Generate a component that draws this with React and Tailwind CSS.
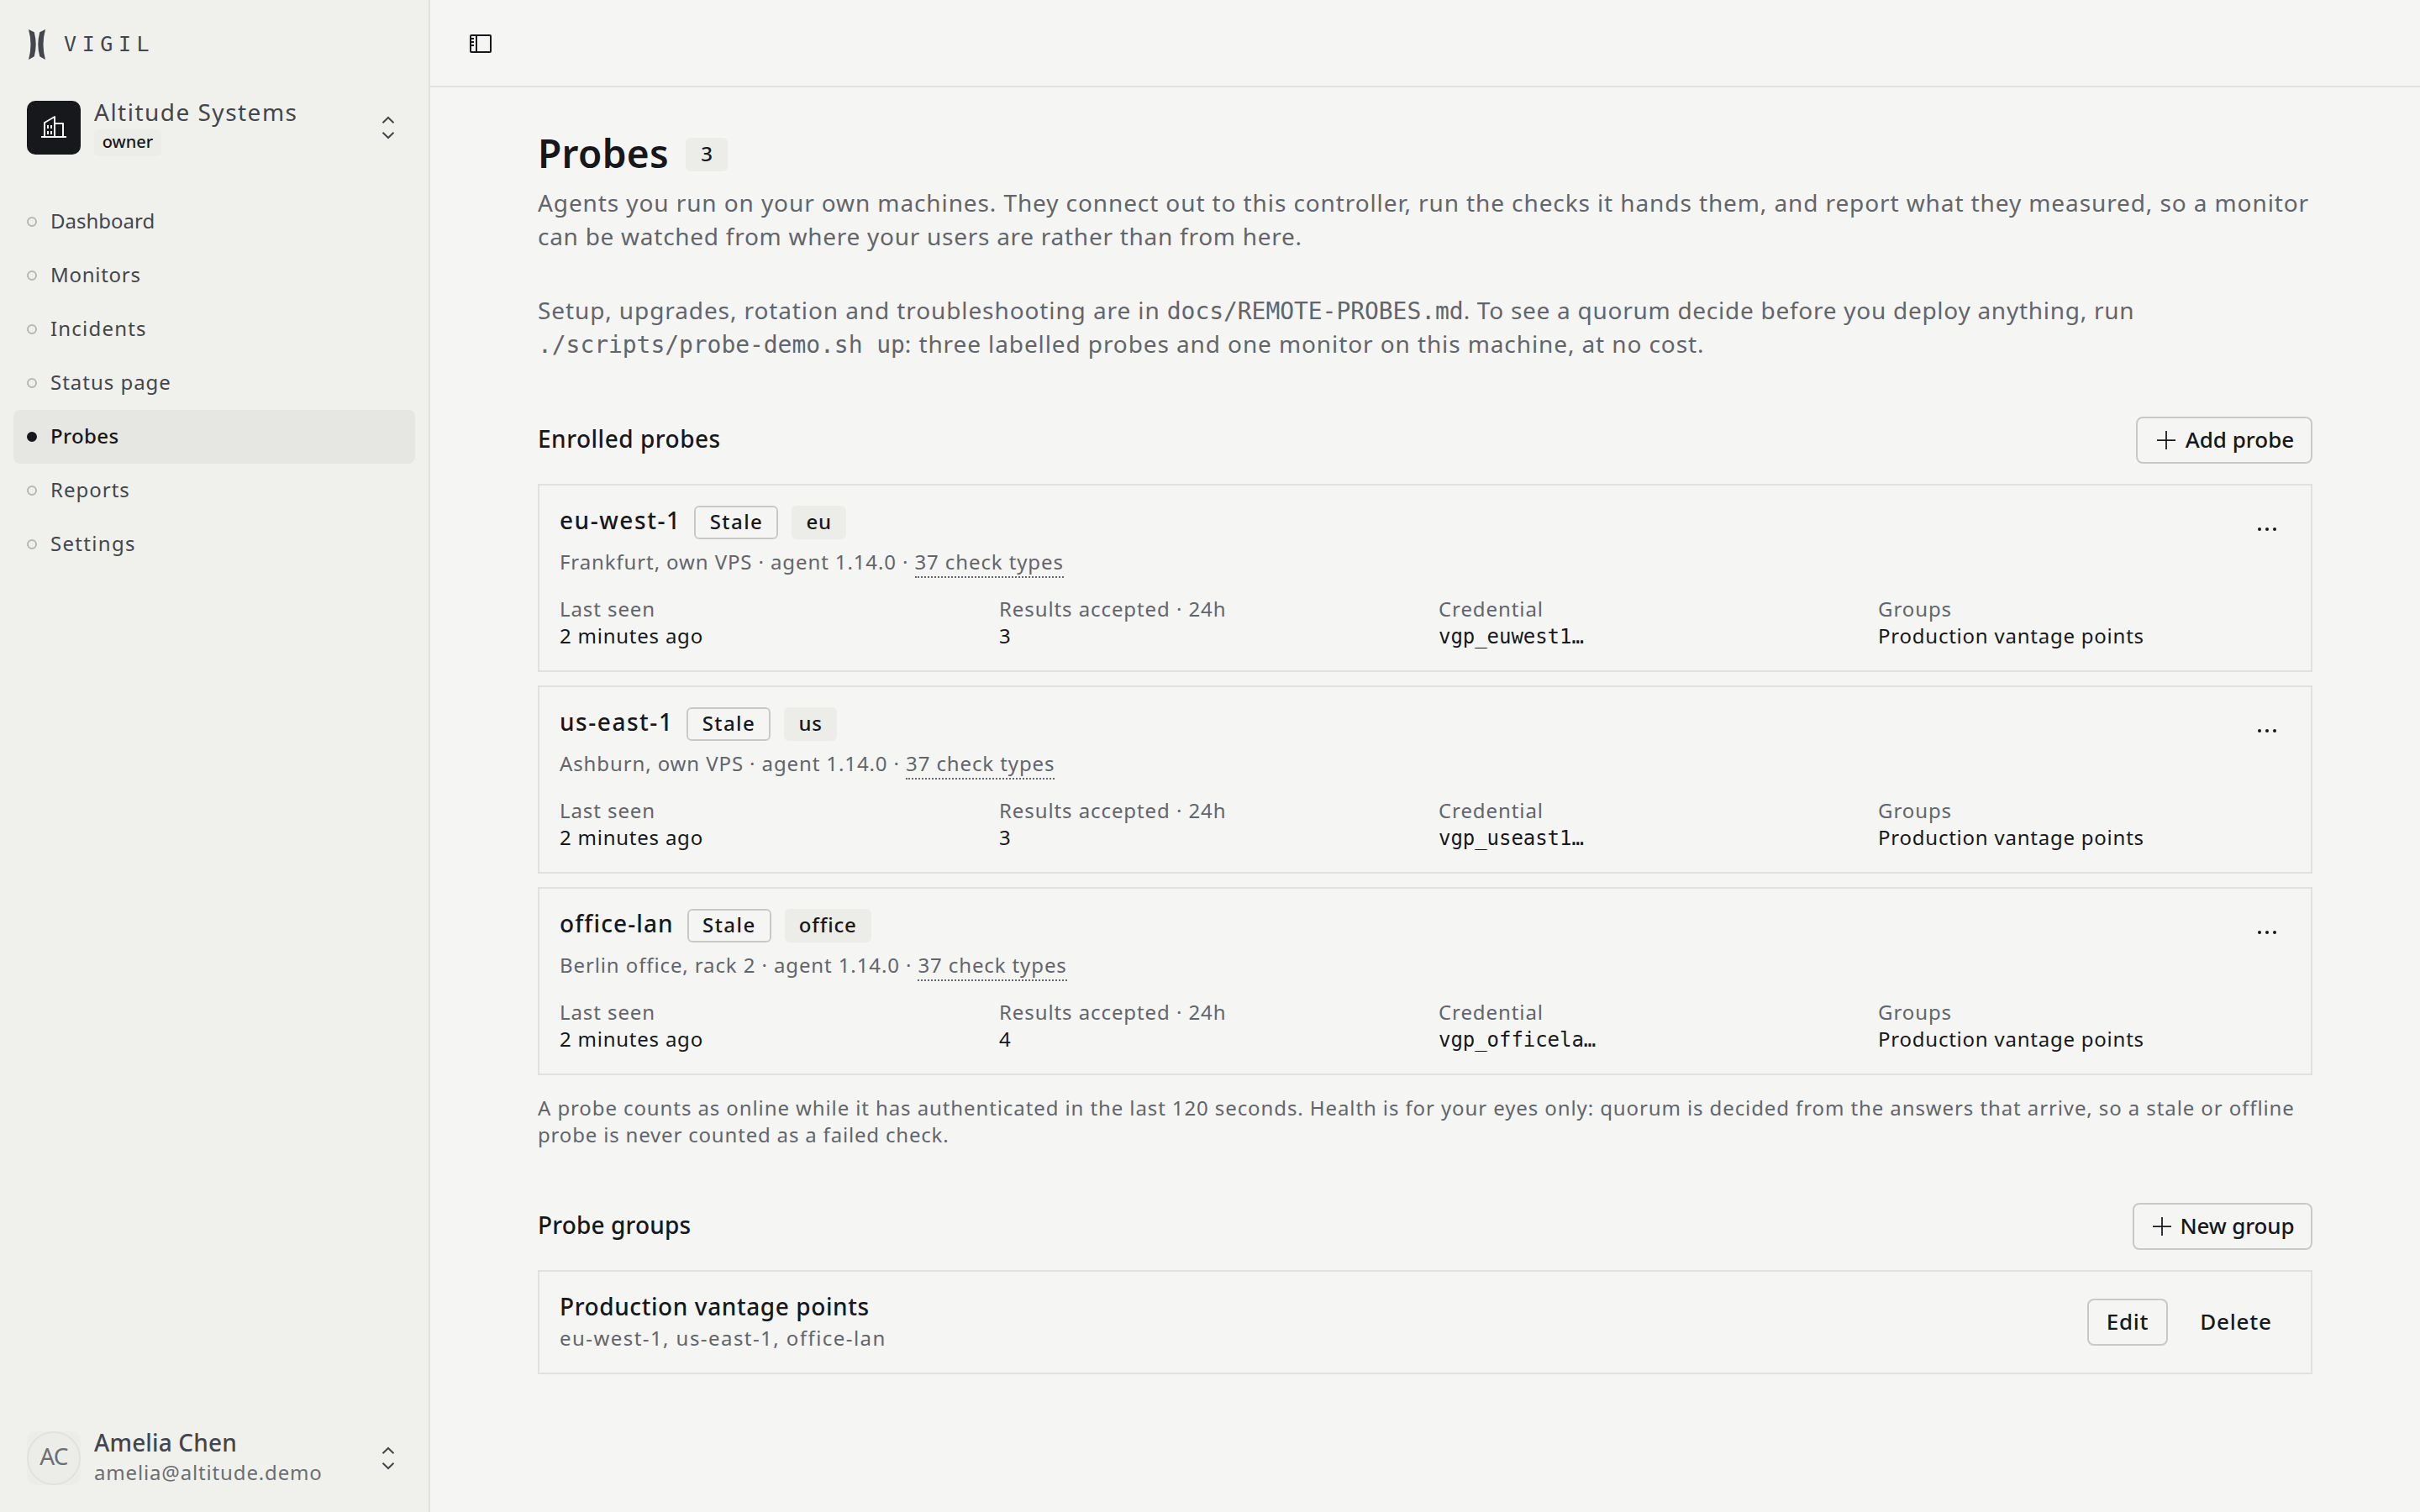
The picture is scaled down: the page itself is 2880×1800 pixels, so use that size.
import React from 'react';
import { clsx } from 'clsx';

const NAV = [
  { title: 'Dashboard', tracking: 'tracking-[0em]' },
  { title: 'Monitors', tracking: 'tracking-[0.03em]' },
  { title: 'Incidents', tracking: 'tracking-[0.05em]' },
  { title: 'Status page', tracking: 'tracking-[0.041em]' },
  { title: 'Probes', tracking: 'tracking-[0.015em]' },
  { title: 'Reports', tracking: 'tracking-[0.042em]' },
  { title: 'Settings', tracking: 'tracking-[0.055em]' },
];

const PROBES = [
  { name: 'eu-west-1', tracking: 'tracking-[0.055em]', label: 'eu', place: 'Frankfurt, own VPS', accepted: 3, credential: 'vgp_euwest1…' },
  { name: 'us-east-1', tracking: 'tracking-[0.055em]', label: 'us', place: 'Ashburn, own VPS', accepted: 3, credential: 'vgp_useast1…' },
  { name: 'office-lan', tracking: 'tracking-[0.04em]', label: 'office', place: 'Berlin office, rack 2', accepted: 4, credential: 'vgp_officela…' },
];

function Logo() {
  return (
    <svg viewBox="0 0 20 36" className="h-9 w-5 shrink-0" fill="#43464c">
      <path d="M0 0L6.7 3.3Q10.7 18 6.7 32.3L0 36Q5 18 0 0Z" />
      <path d="M20 0L13.3 3.3Q9.3 18 13.3 32.3L20 36Q15 18 20 0Z" />
    </svg>
  );
}

function BuildingIcon() {
  return (
    <svg viewBox="0 0 32 32" className="h-8 w-8" fill="none" stroke="#f5f5f3" strokeWidth="2" strokeLinejoin="round">
      <path d="M1 27H31M5 27V10L17 3V27M17 11H27V27" />
      <path d="M9 13V17M13 13V17M9 20V24M13 20V24" />
    </svg>
  );
}

function Chevrons() {
  return (
    <svg viewBox="0 0 32 32" className="h-8 w-8 shrink-0" fill="none" stroke="#43464c" strokeWidth="2">
      <path d="M9.5 10.2L16 4L22.5 10.2M9.5 21.8L16 28L22.5 21.8" />
    </svg>
  );
}

function SidebarIcon() {
  return (
    <svg viewBox="0 0 32 32" className="h-8 w-8" fill="none" stroke="#17181c" strokeWidth="2">
      <rect x="4" y="6" width="24" height="20" rx="1" />
      <path d="M11 6V26M5 10H8M5 14H8M5 18H8" />
    </svg>
  );
}

function PlusIcon() {
  return (
    <svg viewBox="0 0 22 22" className="h-[22px] w-[22px]" stroke="#17181c" strokeWidth="1.75">
      <path d="M0 11H22M11 0V22" />
    </svg>
  );
}

function Button({ ghost, className, children }) {
  return (
    <button
      className={clsx(
        'flex h-14 items-center justify-center rounded-lg border-2 text-[26px] font-medium leading-none',
        ghost ? 'border-transparent' : 'border-[#c9cac8]',
        className,
      )}
    >
      {children}
    </button>
  );
}

function Badge({ outline, className, children }) {
  return (
    <span
      className={clsx(
        'flex h-10 items-center justify-center rounded-md pb-0.5 text-2xl font-medium leading-none',
        outline ? 'border-2 border-[#c9cac8]' : 'bg-[#ecede8]',
        className,
      )}
    >
      {children}
    </span>
  );
}

function Code({ children }) {
  return (
    <code className="font-['DejaVu_Sans_Mono',monospace] leading-none tracking-[-0.002em]">{children}</code>
  );
}

function Field({ label, mono, children }) {
  return (
    <div className="text-2xl leading-8 tracking-[0.032em]">
      <dt className="tracking-[0.038em] text-[#62656b]">{label}</dt>
      <dd>{mono ? <Code>{children}</Code> : children}</dd>
    </div>
  );
}

function ProbeCard({ probe }) {
  return (
    <article className="flex h-56 justify-between border-2 border-[#e1e2df] px-6 pt-6">
      <div className="grow">
        <div className="flex h-10 items-center">
          <h3 className={clsx('pb-1.5 text-[28px] font-medium leading-none', probe.tracking)}>{probe.name}</h3>
          <Badge outline className="ml-4 w-[100px] tracking-[0.06em]">Stale</Badge>
          <Badge className="ml-4 px-[17px] tracking-[0.035em]">{probe.label}</Badge>
        </div>
        <p className="mt-[11px] text-2xl leading-8 tracking-[0.037em] text-[#62656b]">
          {probe.place} · agent 1.14.0 ·{' '}
          <span className="border-b-2 border-dotted border-[#62656b] pb-px">37 check types</span>
        </p>
        <dl className="-mr-10 mt-6 grid grid-cols-4 gap-x-8">
          <Field label="Last seen">2 minutes ago</Field>
          <Field label="Results accepted · 24h">{probe.accepted}</Field>
          <Field label="Credential" mono>{probe.credential}</Field>
          <Field label="Groups">Production vantage points</Field>
        </dl>
      </div>
      <button className="mr-4 mt-[26px] flex h-1 w-6 items-center justify-between px-px">
        <span className="h-1 w-1 rounded-full bg-[#17181c]" />
        <span className="h-1 w-1 rounded-full bg-[#17181c]" />
        <span className="h-1 w-1 rounded-full bg-[#17181c]" />
      </button>
    </article>
  );
}

function Sidebar() {
  return (
    <aside className="flex w-[512px] shrink-0 flex-col border-r-2 border-[#e1e2df] bg-[#f0f1ec] text-[#43464c]">
      <div className="flex h-[104px] items-center gap-[22px] pl-[34px] pt-0.5">
        <Logo />
        <span className="pb-0.5 font-['DejaVu_Sans_Mono',monospace] text-[25px] leading-none tracking-[6.6px]">VIGIL</span>
      </div>

      <div className="flex h-[82px] items-start px-8">
        <div className="mt-4 flex h-16 w-16 items-center justify-center rounded-[10px] bg-[#17181c]">
          <BuildingIcon />
        </div>
        <div className="ml-4 mt-[9px] grow">
          <p className="text-[28px] leading-10 tracking-[0.053em]">Altitude Systems</p>
          <span className="mt-px flex h-8 w-20 items-center justify-center rounded-md bg-[#ecede8] pb-[3px] text-xl font-medium leading-none text-[#17181c]">
            owner
          </span>
        </div>
        <div className="mt-8"><Chevrons /></div>
      </div>

      <nav className="mt-[46px] px-4">
        {NAV.map(({ title, tracking }) => {
          const active = title === 'Probes';
          return (
            <a
              key={title}
              className={clsx(
                'flex h-16 items-center gap-4 rounded-lg px-4 text-2xl leading-none',
                tracking,
                active && 'bg-[#e6e7e2] font-medium text-[#17181c]',
              )}
            >
              <span className={clsx('h-3 w-3 rounded-full border-2', active ? 'border-[#17181c] bg-[#17181c]' : 'border-[#b5b7b2]')} />
              <span className="pb-0.5">{title}</span>
            </a>
          );
        })}
      </nav>

      <div className="mb-8 mt-auto flex h-16 items-start px-8">
        <div className="flex h-16 w-16 items-center justify-center rounded-[10px] bg-[#ecede8]">
          <span className="flex h-16 w-16 items-center justify-center rounded-full border-2 border-[#e1e2df] pb-1.5 text-[28px] leading-none tracking-tight text-[#6b6e75]">
            AC
          </span>
        </div>
        <div className="-mt-[7px] ml-4 grow">
          <p className="text-[28px] font-medium leading-10 tracking-[0.005em]">Amelia Chen</p>
          <p className="text-2xl leading-8 tracking-[0.035em] text-[#6b6e75]">amelia@altitude.demo</p>
        </div>
        <div className="mt-4"><Chevrons /></div>
      </div>
    </aside>
  );
}

export default function App() {
  return (
    <div className="flex h-[1800px] w-[2880px] overflow-hidden bg-[#f5f5f3] font-['Noto_Sans',sans-serif] text-[#17181c]">
      <Sidebar />
      <main className="grow">
        <header className="flex h-[104px] items-center border-b-2 border-[#e1e2df] pl-11 pt-0.5">
          <SidebarIcon />
        </header>

        <div className="px-32 pt-14">
          <div className="flex h-12 items-start gap-5">
            <h1 className="text-[46px] font-semibold leading-[45px] tracking-[0.007em]">Probes</h1>
            <Badge className="mt-1 w-[50px]">3</Badge>
          </div>
          <div className="mt-[13px] space-y-12 text-[28px] leading-10 tracking-[0.032em] text-[#62656b]">
            <p>
              Agents you run on your own machines. They connect out to this controller, run the checks it hands them, and report what they measured, so a monitor
              <br />
              <span className="tracking-[0.026em]">can be watched from where your users are rather than from here.</span>
            </p>
            <p>
              Setup, upgrades, rotation and troubleshooting are in <Code>docs/REMOTE-PROBES.md</Code>
              <span className="tracking-[0.026em]">. To see a quorum decide before you deploy anything, run</span>
              <br />
              <Code>./scripts/probe-demo.sh up</Code>: three labelled probes and one monitor on this machine, at no cost.
            </p>
          </div>

          <section className="mt-[67px]">
            <div className="flex items-center justify-between">
              <h2 className="pb-[5px] text-[28px] font-medium leading-none tracking-[0.018em]">Enrolled probes</h2>
              <Button className="w-[210px] gap-3 pl-[3px]">
                <PlusIcon />
                <span className="pb-[3px]">Add probe</span>
              </Button>
            </div>
            <div className="mt-6 space-y-4">
              {PROBES.map((probe) => (
                <ProbeCard key={probe.name} probe={probe} />
              ))}
            </div>
            <p className="mt-[23px] text-2xl leading-8 tracking-[0.0375em] text-[#62656b]">
              A probe counts as online while it has authenticated in the last 120 seconds. Health is for your eyes only: quorum is decided from the answers that arrive, so a stale or offline
              <br />
              <span className="tracking-[0.034em]">probe is never counted as a failed check.</span>
            </p>
          </section>

          <section className="mt-[65px]">
            <div className="flex items-center justify-between">
              <h2 className="pb-[5px] text-[28px] font-medium leading-none tracking-[0.005em]">Probe groups</h2>
              <Button className="w-[214px] gap-2.5 pl-[3px]">
                <PlusIcon />
                <span className="pb-[3px] tracking-[-0.005em]">New group</span>
              </Button>
            </div>
            <div className="mt-6 flex h-[124px] items-center justify-between border-2 border-[#e1e2df] px-6">
              <div className="pb-1">
                <h3 className="text-[28px] font-medium leading-10 tracking-[0.021em]">Production vantage points</h3>
                <p className="mt-0.5 text-2xl leading-8 tracking-[0.06em] text-[#62656b]">eu-west-1, us-east-1, office-lan</p>
              </div>
              <div className="flex gap-4">
                <Button className="w-24 pb-[3px] tracking-[0.03em]">Edit</Button>
                <Button ghost className="w-[130px] pb-[3px] tracking-[0.03em]">Delete</Button>
              </div>
            </div>
          </section>
        </div>
      </main>
    </div>
  );
}
